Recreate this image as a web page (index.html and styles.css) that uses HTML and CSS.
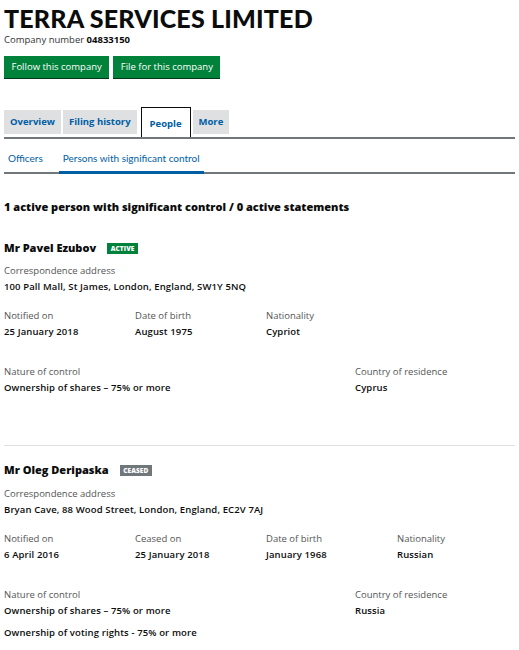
FILE: index.html
```html
<!DOCTYPE html>
<html>
<head>
<meta charset="utf-8">
<link rel="stylesheet" href="styles.css">
</head>
<body>
<div class="page">
  <h1 class="title">TERRA SERVICES LIMITED</h1>
  <p class="company-number">Company number <strong>04833150</strong></p>
  <div class="actions">
    <a class="button">Follow this company</a>
    <a class="button">File for this company</a>
  </div>

  <ul class="tabs">
    <li class="tab">Overview</li>
    <li class="tab">Filing history</li>
    <li class="tab tab-active">People</li>
    <li class="tab">More</li>
  </ul>

  <ul class="subtabs">
    <li class="subtab">Officers</li>
    <li class="subtab subtab-active">Persons with significant control</li>
  </ul>

  <h2 class="summary">1 active person with significant control / 0 active statements</h2>

  <section class="person">
    <h3 class="name">Mr Pavel Ezubov <span class="badge badge-active">ACTIVE</span></h3>
    <dl class="field">
      <dt>Correspondence address</dt>
      <dd>100 Pall Mall, St James, London, England, SW1Y 5NQ</dd>
    </dl>
    <div class="row">
      <dl class="field col"><dt>Notified on</dt><dd>25 January 2018</dd></dl>
      <dl class="field col"><dt>Date of birth</dt><dd>August 1975</dd></dl>
      <dl class="field col"><dt>Nationality</dt><dd>Cypriot</dd></dl>
    </div>
    <div class="row row-control">
      <dl class="field col-wide"><dt>Nature of control</dt><dd>Ownership of shares – 75% or more</dd></dl>
      <dl class="field"><dt>Country of residence</dt><dd>Cyprus</dd></dl>
    </div>
  </section>

  <section class="person person-ceased">
    <h3 class="name">Mr Oleg Deripaska <span class="badge badge-ceased">CEASED</span></h3>
    <dl class="field">
      <dt>Correspondence address</dt>
      <dd>Bryan Cave, 88 Wood Street, London, England, EC2V 7AJ</dd>
    </dl>
    <div class="row">
      <dl class="field col"><dt>Notified on</dt><dd>6 April 2016</dd></dl>
      <dl class="field col"><dt>Ceased on</dt><dd>25 January 2018</dd></dl>
      <dl class="field col"><dt>Date of birth</dt><dd>January 1968</dd></dl>
      <dl class="field col"><dt>Nationality</dt><dd>Russian</dd></dl>
    </div>
    <div class="row row-control">
      <dl class="field col-wide"><dt>Nature of control</dt><dd>Ownership of shares – 75% or more</dd><dd class="extra">Ownership of voting rights - 75% or more</dd></dl>
      <dl class="field"><dt>Country of residence</dt><dd>Russia</dd></dl>
    </div>
  </section>
</div>
</body>
</html>
```
FILE: styles.css
```css
* { box-sizing: border-box; }
html, body { margin: 0; padding: 0; background: #fff; }
body {
  font-family: "Open Sans", "Liberation Sans", Arial, sans-serif;
  color: #0b0c0c;
  font-size: 10px;
}
.page { padding: 4px 4px 0 4px; width: 519px; }
.title {
  margin: 0;
  font-family: Lato, "Liberation Sans", Arial, sans-serif;
  font-size: 25px;
  line-height: 28px;
  font-weight: 900;
  letter-spacing: 0.2px;
}
.company-number {
  margin: 1px 0 0 0;
  font-size: 9.5px;
  line-height: 14px;
  color: #333;
}
.company-number strong { color: #0b0c0c; font-weight: 700; }
.actions { display: flex; gap: 4px; margin-top: 9px; }
.button {
  display: block;
  background: #00823b;
  color: #fff;
  font-size: 9.5px;
  line-height: 22px;
  height: 22px;
  padding: 0 7.5px;
  box-shadow: 0 1px 0 #003618;
}
.tabs {
  list-style: none;
  margin: 29px 0 0 0;
  padding: 0;
  display: flex;
  gap: 2px;
  border-bottom: 2px solid #6f777b;
  height: 32px;
}
.tab {
  background: #dee0e2;
  color: #005ea5;
  font-weight: 700;
  font-size: 9.5px;
  line-height: 24px;
  height: 24px;
  margin-top: 3px;
  padding: 0 6px;
}
.tab-active {
  background: #fff;
  color: #005ea5;
  border: 1px solid #0b0c0c;
  border-bottom: none;
  height: 30px;
  margin-top: 0;
  line-height: 32px;
  padding: 0 8px;
  margin-left: 2px;
}
.subtabs {
  list-style: none;
  margin: 0;
  padding: 0;
  display: flex;
  border-bottom: 2px solid #6f777b;
  height: 35px;
  align-items: flex-end;
  font-family: Lato, "Liberation Sans", Arial, sans-serif;
}
.subtab {
  color: #005ea5;
  font-size: 10px;
  line-height: 16px;
  padding: 0 4px 8px 4px;
  margin-right: 12px;
  margin-bottom: -2px;
}
.subtab-active {
  color: #005ea5;
  border-bottom: 3px solid #005ea5;
  padding-bottom: 5px;
}
.summary {
  margin: 26px 0 0 0;
  font-size: 11px;
  line-height: 14px;
  font-weight: 800;
}
.person { padding-top: 27px; }
.person-ceased {
  border-top: 1px solid #dee0e2;
  margin-top: 50px;
  padding-top: 17px;
}
.name {
  margin: 0;
  font-size: 11px;
  line-height: 14px;
  font-weight: 800;
  display: flex;
  align-items: center;
  gap: 11px;
}
.badge {
  font-size: 6.5px;
  font-weight: 800;
  color: #fff;
  padding: 1px 3.5px;
  line-height: 9px;
  letter-spacing: 0.1px;
}
.badge-active { background: #00823b; }
.badge-ceased { background: #6f777b; }
.field { margin: 0; }
.person .name + .field { margin-top: 9px; }
.person-ceased .name + .field { margin-top: 10px; }
.field dt {
  font-size: 9.5px;
  line-height: 14px;
  color: #555;
  font-weight: 400;
}
.field dd {
  margin: 2px 0 0 0;
  font-size: 9.5px;
  line-height: 14px;
  font-weight: 600;
  color: #0b0c0c;
  letter-spacing: 0.12px;
}
.field dd.extra { margin-top: 8px; }
.row { display: flex; margin-top: 15px; }
.col { width: 131px; flex: none; }
.row-control { margin-top: 26px; }
.col-wide { width: 351px; flex: none; }
```
